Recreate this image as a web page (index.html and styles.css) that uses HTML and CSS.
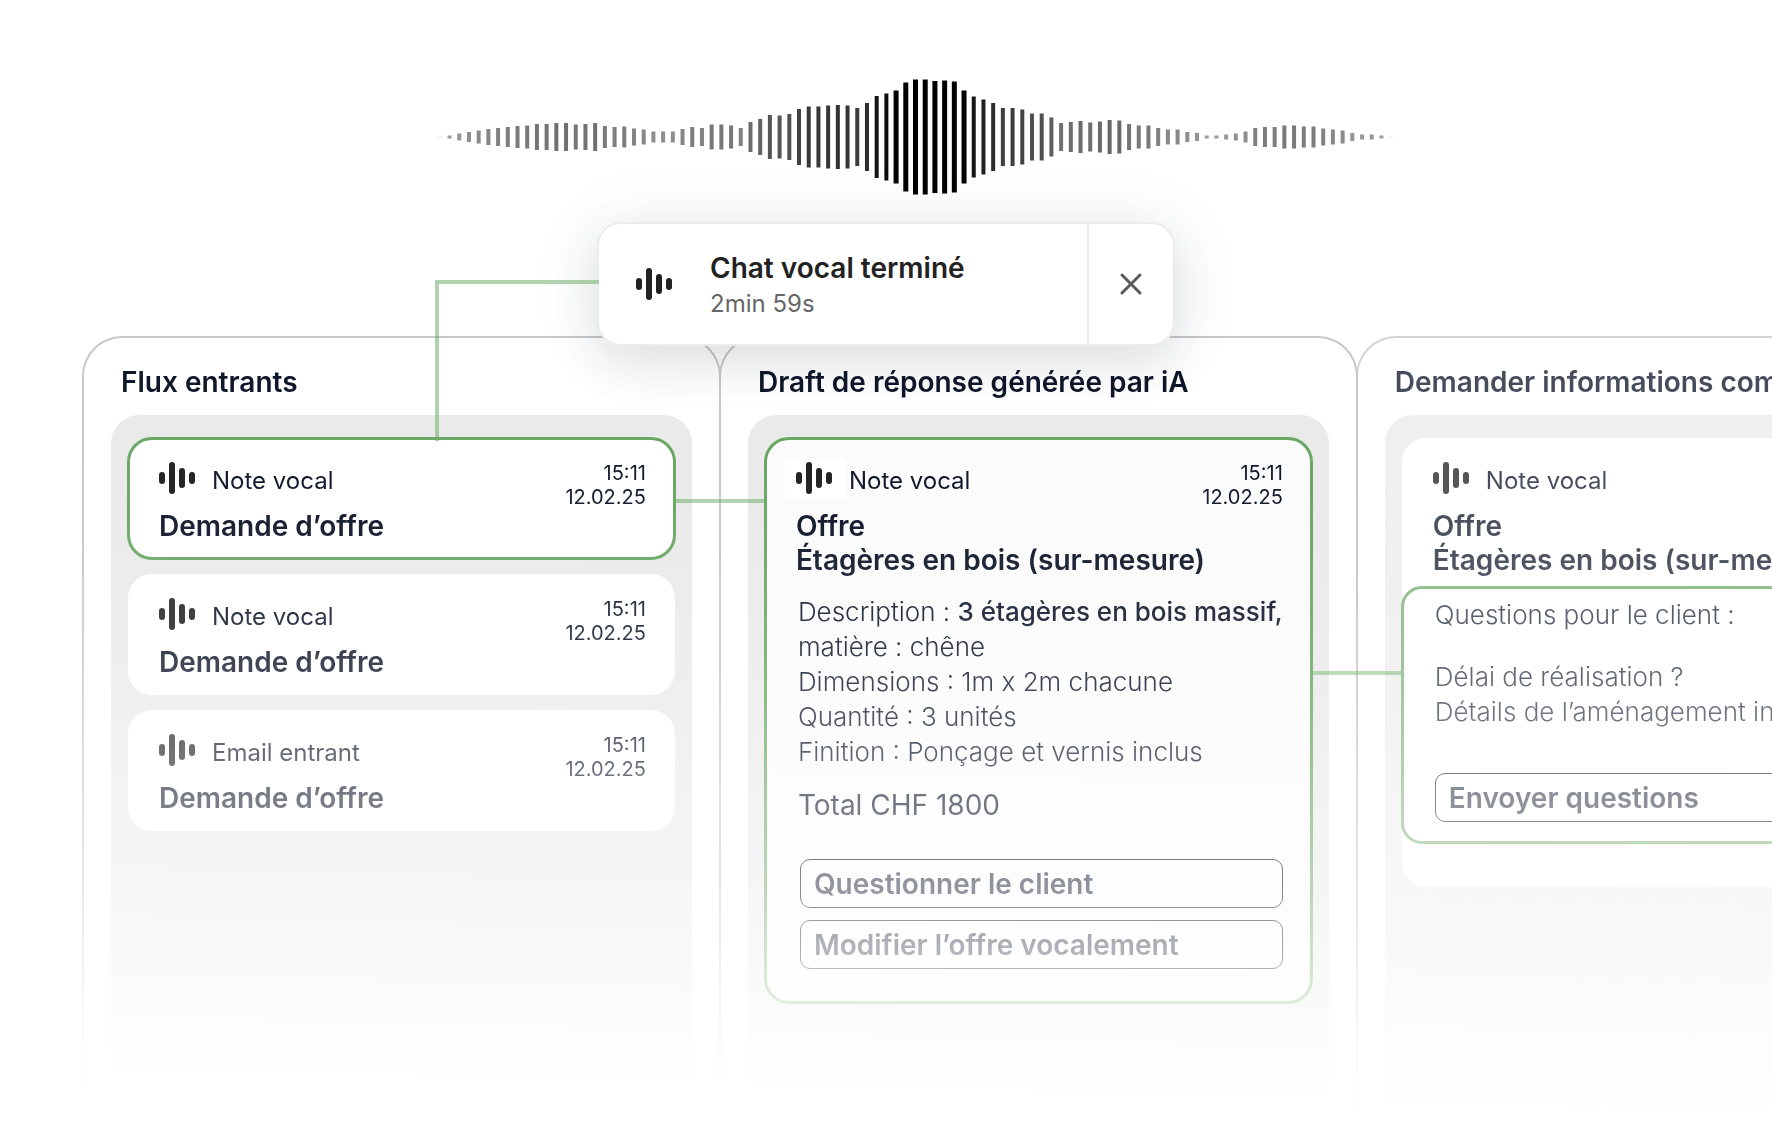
FILE: index.html
```html
<!DOCTYPE html>
<html lang="fr">
<head>
<meta charset="utf-8">
<meta name="viewport" content="width=device-width, initial-scale=1">
<title>Chat vocal</title>
<link rel="stylesheet" href="styles.css">
</head>
<body>
<svg class="sprite" aria-hidden="true">
  <symbol id="voice" viewBox="0 0 36 32">
    <rect x="0" y="10" width="6" height="12" rx="3"/>
    <rect x="10" y="0" width="6" height="32" rx="3"/>
    <rect x="20" y="6" width="6" height="20" rx="3"/>
    <rect x="30" y="10" width="6" height="12" rx="3"/>
  </symbol>
</svg>
<main class="stage">
  <div class="wave"><svg id="wave" class="wave-bars" viewBox="0 0 961 116" aria-hidden="true"></svg></div>

  <section class="toast">
    <div class="toast-main">
      <svg class="icon"><use href="#voice"/></svg>
      <div>
        <p class="toast-title">Chat vocal terminé</p>
        <p class="toast-time">2min 59s</p>
      </div>
    </div>
    <button class="toast-close" type="button" aria-label="Fermer">
      <svg class="cross" viewBox="0 0 22 22"><path d="M2 2L20 20M20 2L2 20"/></svg>
    </button>
  </section>

  <div class="board">
    <section class="column">
      <h2 class="column-title">Flux entrants</h2>
      <div class="panel">
        <article class="card card-active link-inbox">
          <div class="card-head">
            <svg class="icon"><use href="#voice"/></svg>
            <span class="label">Note vocal</span>
            <time class="date">15:11<br>12.02.25</time>
          </div>
          <h3 class="title">Demande d’offre</h3>
        </article>
        <article class="card">
          <div class="card-head">
            <svg class="icon"><use href="#voice"/></svg>
            <span class="label">Note vocal</span>
            <time class="date">15:11<br>12.02.25</time>
          </div>
          <h3 class="title">Demande d’offre</h3>
        </article>
        <article class="card">
          <div class="card-head">
            <svg class="icon"><use href="#voice"/></svg>
            <span class="label">Email entrant</span>
            <time class="date">15:11<br>12.02.25</time>
          </div>
          <h3 class="title">Demande d’offre</h3>
        </article>
      </div>
    </section>

    <section class="column">
      <h2 class="column-title">Draft de réponse générée par iA</h2>
      <div class="panel">
        <article class="card card-active card-draft link-draft">
          <div class="card-head">
            <svg class="icon icon-boxed"><use href="#voice"/></svg>
            <span class="label">Note vocal</span>
            <time class="date">15:11<br>12.02.25</time>
          </div>
          <h3 class="title">Offre<br>Étagères en bois (sur-mesure)</h3>
          <p class="details">Description : <b>3 étagères en bois massif,</b><br>matière : chêne<br>Dimensions : 1m x 2m chacune<br>Quantité : 3 unités<br>Finition : Ponçage et vernis inclus</p>
          <p class="total">Total CHF 1800</p>
          <div class="actions">
            <button class="action" type="button">Questionner le client</button>
            <button class="action" type="button">Modifier l’offre vocalement</button>
          </div>
        </article>
      </div>
    </section>

    <section class="column column-next">
      <h2 class="column-title">Demander informations complémentaires</h2>
      <div class="panel">
        <article class="card card-questions">
          <div class="card-head">
            <svg class="icon"><use href="#voice"/></svg>
            <span class="label">Note vocal</span>
            <time class="date">15:11<br>12.02.25</time>
          </div>
          <h3 class="title">Offre<br>Étagères en bois (sur-mesure)</h3>
          <div class="questions">
            <p class="question-intro">Questions pour le client :</p>
            <p class="question-list">Délai de réalisation ?<br>Détails de l’aménagement intérieur ?</p>
            <button class="action" type="button">Envoyer questions</button>
          </div>
        </article>
      </div>
    </section>
  </div>
</main>
<script src="wave.js"></script>
</body>
</html>
```
FILE: styles.css
```css
* { box-sizing: border-box; }

body {
  margin: 0;
  background: #fff;
  color: #0f172a;
  font-family: Inter, "Liberation Sans", sans-serif;
  font-optical-sizing: none;
}

h2, h3, p { margin: 0; }
button { font: inherit; }
.sprite { position: absolute; width: 0; height: 0; }

.stage {
  min-height: 100vh;
  padding-top: 79px;
  overflow: hidden;
}

/* Waveform */
.wave {
  display: flex;
  justify-content: center;
  padding-left: 58px;
}
.wave-bars { width: 961px; height: 116px; }

/* Voice chat notification */
.toast {
  position: relative;
  z-index: 2;
  display: flex;
  width: 578px;
  margin: 27px auto 0;
  border: 2px solid #ececed;
  border-radius: 24px;
  background: #fff;
  box-shadow: 0 16px 48px rgba(24, 32, 44, 0.1), 0 4px 72px rgba(40, 70, 60, 0.08);
}
.toast::before {
  content: "";
  position: absolute;
  right: 100%;
  top: 56px;
  width: 160px;
  height: 157px;
  border-top: 4px solid rgba(103, 170, 97, 0.52);
  border-left: 4px solid rgba(103, 170, 97, 0.52);
}
.toast-main {
  flex: 1;
  display: flex;
  align-items: center;
  gap: 38px;
  padding: 26px 37px 22px;
}
.toast-main .icon { margin-bottom: 4px; }
.toast-title { font-size: 28px; line-height: 36px; font-weight: 600; color: #222; }
.toast-time { font-size: 24px; line-height: 36px; color: #666; }
.toast-close {
  display: flex;
  align-items: center;
  justify-content: center;
  width: 86px;
  padding: 0;
  border: 0;
  border-left: 2px solid #ececed;
  background: none;
}
.cross { width: 22px; height: 22px; fill: none; stroke: #5a5a5a; stroke-width: 3; stroke-linecap: round; }

.icon { flex: none; width: 36px; height: 34px; fill: #222; }

/* Board */
.board {
  display: flex;
  margin-top: -10px;
  padding-left: 82px;
  overflow: hidden;
  mask-image: linear-gradient(181.5deg, #000 18%, rgba(0, 0, 0, 0.97) 26%, rgba(0, 0, 0, 0.84) 42%, rgba(0, 0, 0, 0.6) 58%, rgba(0, 0, 0, 0.45) 70%, rgba(0, 0, 0, 0.31) 78%, rgba(0, 0, 0, 0.17) 85%, rgba(0, 0, 0, 0.02) 94%, transparent);
}
.column {
  flex: 0 0 calc(36vw + 1px);
  display: flex;
  flex-direction: column;
  margin-right: -2px;
  padding: 0 27px;
  border: 2px solid #c8c8c8;
  border-bottom: 0;
  border-radius: 40px 40px 0 0;
}
.column-next { opacity: 0.77; }
.column-title {
  padding: 27px 10px 16px;
  font-size: 28px;
  line-height: 34px;
  font-weight: 600;
  white-space: nowrap;
}
.panel {
  flex: 1;
  display: flex;
  flex-direction: column;
  gap: 15px;
  padding: 23px 17px 112px;
  border-radius: 28px 28px 0 0;
  background: #eaeaea;
}

/* Cards */
.card {
  padding: 23px 29px 16px 31px;
  border-radius: 24px;
  background: #fff;
}
.card-active {
  position: relative;
  z-index: 1;
  outline: 3px solid #6ba764;
  outline-offset: -2px;
}
.card-active::after {
  content: "";
  position: absolute;
  left: 100%;
  width: 89px;
  height: 4px;
  background: rgba(103, 170, 97, 0.52);
}
.link-inbox::after { top: 61px; }
.link-draft::after { top: 233px; }
.card-draft { padding-bottom: 34px; background: #fbfbfb; }
.card-questions { padding: 23px 0 44px; }

.card-head {
  display: flex;
  align-items: flex-start;
  gap: 17px;
}
.card-questions .card-head,
.card-questions .title { padding: 0 30px 0 31px; }
.icon-boxed { background: #fff; box-shadow: -8px 0 0 3px #fff, 11px 0 0 3px #fff; }
.label { font-size: 24px; line-height: 40px; }
.date { margin-left: auto; font-size: 20px; line-height: 24px; text-align: right; }
.title { font-size: 28px; line-height: 34px; font-weight: 600; white-space: nowrap; }

.details,
.question-intro,
.question-list { font-size: 26px; line-height: 35px; font-weight: 300; white-space: nowrap; }
.details { padding: 17px 0 0 2px; }
.details b { font-weight: 500; }
.total { padding: 19px 0 0 2px; font-size: 28px; line-height: 34px; }

.actions {
  display: flex;
  flex-direction: column;
  gap: 12px;
  padding: 37px 0 0 4px;
}
.action {
  width: 100%;
  height: 49px;
  padding: 0 13px;
  border: 1px solid #000;
  border-radius: 10px;
  background: none;
  color: #0f172a;
  font-size: 28px;
  line-height: 34px;
  font-weight: 600;
  text-align: left;
}

.questions {
  margin-top: 10px;
  padding: 10px 30px 21px 33px;
  border-radius: 20px;
  outline: 3px solid #6ba764;
  outline-offset: -2px;
}
.question-list { padding: 27px 0 44px; }
```
FILE: wave.js
```js
// Bar heights of the voice recording, left to right.
const heights = [
  1, 3, 7, 10, 13, 16, 18, 20, 22, 23, 26, 26, 28, 28, 25, 26, 28, 22, 20, 21,
  17, 15, 11, 11, 11, 16, 20, 18, 25, 25, 23, 18, 30, 36, 44, 43, 46, 56, 61, 61,
  63, 64, 63, 58, 68, 82, 87, 93, 109, 115, 115, 112, 113, 111, 93, 81, 75, 68, 58, 58,
  55, 47, 47, 39, 28, 30, 32, 29, 31, 34, 33, 26, 23, 23, 18, 15, 15, 10, 8, 3,
  3, 5, 7, 11, 18, 20, 20, 23, 23, 21, 21, 17, 15, 13, 8, 5, 5, 3, 1
];
const svg = document.getElementById("wave");
const pitch = 961 / heights.length;

heights.forEach((h, i) => {
  const bar = document.createElementNS("http://www.w3.org/2000/svg", "rect");
  const width = h > 90 ? 5 : 4;
  const shade = Math.max(0, Math.round(160 - h * 1.7));
  bar.setAttribute("x", (i + 0.5) * pitch - width / 2);
  bar.setAttribute("y", 58 - h / 2);
  bar.setAttribute("width", width);
  bar.setAttribute("height", h);
  bar.setAttribute("fill", `rgb(${shade},${shade},${shade})`);
  if (h < 2) bar.setAttribute("opacity", 0.25);
  svg.append(bar);
});
```
